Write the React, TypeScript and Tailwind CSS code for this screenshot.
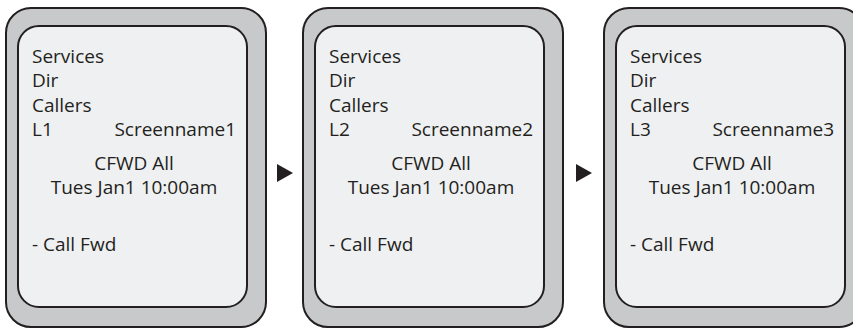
const screens = [
  { line: "L1", name: "Screenname1" },
  { line: "L2", name: "Screenname2" },
  { line: "L3", name: "Screenname3" },
];

function Arrow({ width }: { width: string }) {
  return (
    <div className={`flex h-[321px] shrink-0 items-center justify-center pt-[11px] ${width}`}>
      <svg width="16" height="18" viewBox="0 0 16 18">
        <polygon points="0,0 16,9 0,18" fill="#231f20" />
      </svg>
    </div>
  );
}

function Phone({ line, name }: { line: string; name: string }) {
  return (
    <div className="h-[321px] w-[262px] shrink-0 rounded-[26px] border-2 border-[#231f20] bg-[#c8c9cb] pb-[18px] pl-[10px] pr-[17px] pt-[16px]">
      <div className="flex h-full flex-col rounded-[22px] border-2 border-[#231f20] bg-[#eff0f2] pl-[13px] pr-[10px] pt-[17px] text-[19px] leading-[24.3px] text-[#231f20]">
        <div>Services</div>
        <div>Dir</div>
        <div>Callers</div>
        <div className="flex justify-between">
          <span>{line}</span>
          <span>{name}</span>
        </div>
        <div className="mt-[10px] text-center">CFWD All</div>
        <div className="text-center">Tues Jan1 10:00am</div>
        <div className="mt-[32px]">- Call Fwd</div>
      </div>
    </div>
  );
}

export default function App() {
  return (
    <div
      className="flex h-[328px] w-[853px] items-start overflow-hidden bg-white pl-[5px] pt-[7px]"
      style={{ fontFamily: "'Open Sans', 'Noto Sans', sans-serif" }}
    >
      <Phone {...screens[0]} />
      <Arrow width="w-[35px]" />
      <Phone {...screens[1]} />
      <Arrow width="w-[39px]" />
      <Phone {...screens[2]} />
    </div>
  );
}
